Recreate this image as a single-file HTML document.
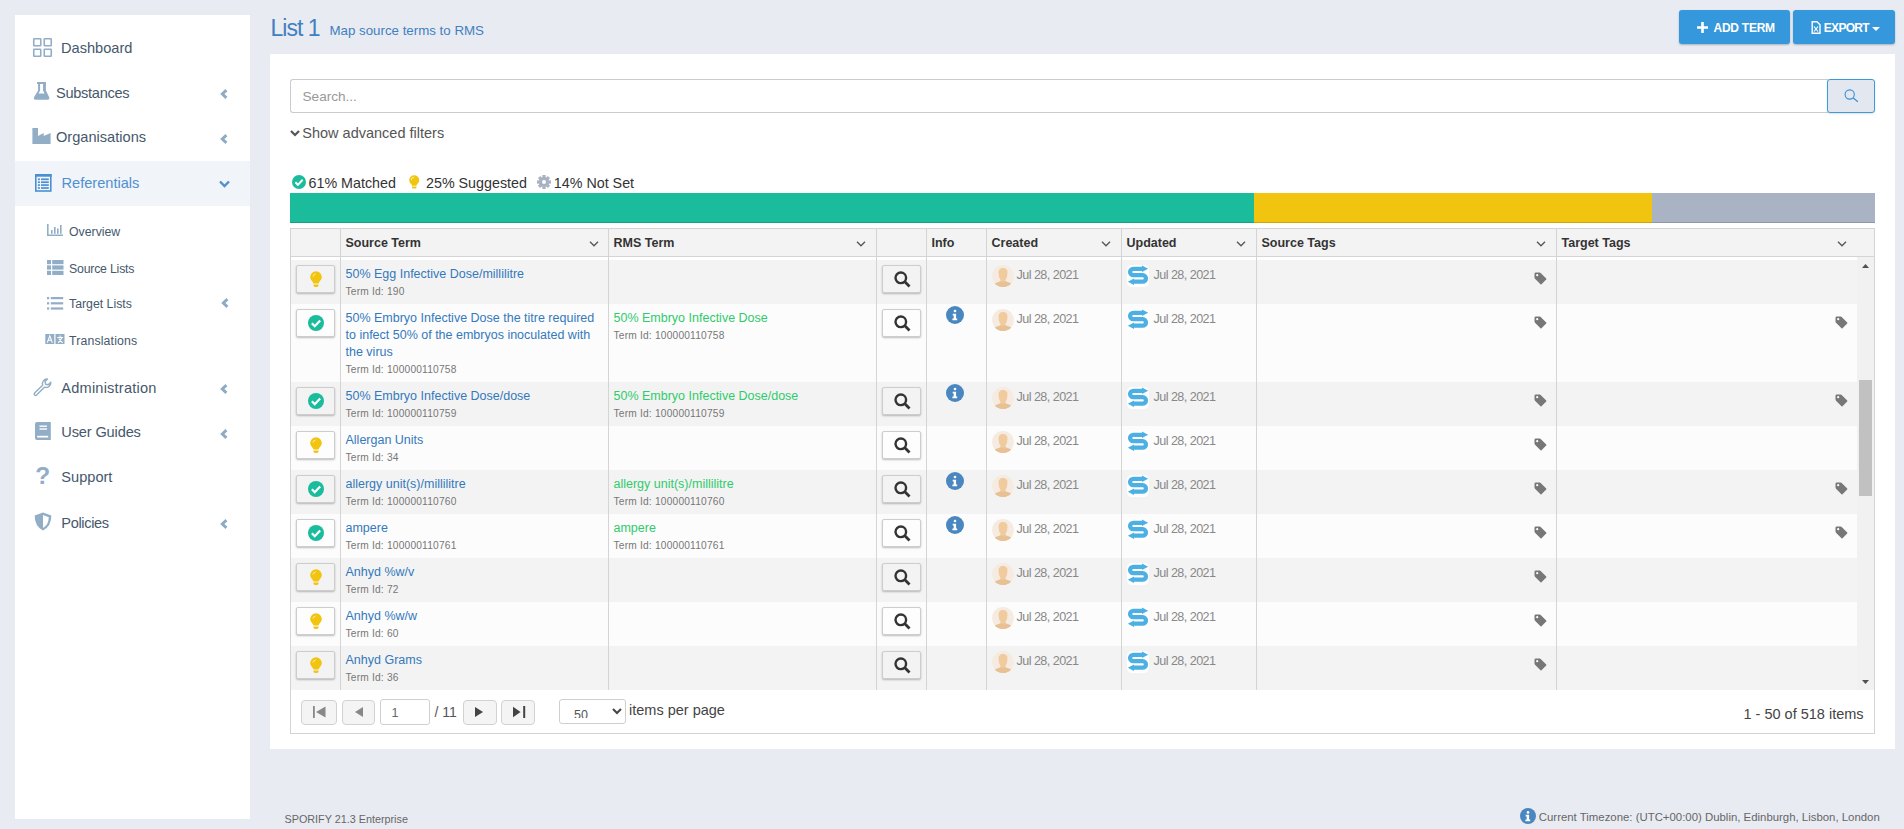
<!DOCTYPE html><html><head><meta charset="utf-8"><style>
*{box-sizing:border-box;margin:0;padding:0}
html,body{width:1904px;height:829px;overflow:hidden;background:#e9ebf3;font-family:"Liberation Sans", sans-serif;color:#333}
.abs{position:absolute}
svg.abs{overflow:visible}
.t{position:absolute;white-space:nowrap;line-height:1}
</style></head><body>
<div class="abs" style="left:15px;top:15px;width:235px;height:804px;background:#fff"></div>
<div class="abs" style="left:15px;top:161px;width:235px;height:45px;background:#f1f4f8"></div>
<svg class="abs" style="left:33px;top:38px" width="19" height="19" viewBox="0 0 19 19" ><rect x="0.75" y="0.75" width="7" height="7" rx="0.6" fill="none" stroke="#92adc6" stroke-width="1.6"/><rect x="0.75" y="11.25" width="7" height="7" rx="0.6" fill="none" stroke="#92adc6" stroke-width="1.6"/><rect x="11.25" y="0.75" width="7" height="7" rx="0.6" fill="none" stroke="#92adc6" stroke-width="1.6"/><rect x="11.25" y="11.25" width="7" height="7" rx="0.6" fill="none" stroke="#92adc6" stroke-width="1.6"/></svg>
<div class="t" style="left:61.00px;top:40.64px;font-size:14.6px;color:#46586c;font-weight:400;">Dashboard</div>
<svg class="abs" style="left:33px;top:81px" width="17" height="19" viewBox="0 0 17 19" ><path d="M4.1 1.1 H13 V3 H12.9 V9.6 L16.2 16.3 Q16.9 18.8 14.5 18.8 H2.8 Q0.3 18.8 1 16.3 L5.1 9.6 V3 H4.1 Z" fill="#92adc6"/><path d="M7.1 3 H10 V9.5 L11.6 12.4 H5.6 L7.1 9.5 Z" fill="#fff"/></svg>
<div class="t" style="left:56.00px;top:85.64px;font-size:14.6px;color:#46586c;font-weight:400;letter-spacing:-0.3px">Substances</div>
<svg class="abs" style="left:32px;top:128px" width="19" height="16" viewBox="0 0 19 16" ><path d="M0.4 0 H6 V8 L11.7 5 V8 L18.6 5 V16 H0.4 Z" fill="#92adc6"/></svg>
<div class="t" style="left:56.00px;top:130.34px;font-size:14.6px;color:#46586c;font-weight:400;">Organisations</div>
<svg class="abs" style="left:35px;top:174px" width="17" height="18" viewBox="0 0 17 18" ><rect x="0.8" y="0.8" width="15" height="16.2" fill="none" stroke="#4a8fd4" stroke-width="1.6"/><rect x="0" y="0" width="16.6" height="2.7" fill="#4a8fd4"/><rect x="2.9" y="4.45" width="2" height="1.7" fill="#4a8fd4"/><rect x="6" y="4.45" width="7.8" height="1.7" fill="#4a8fd4"/><rect x="2.9" y="7.35" width="2" height="1.7" fill="#4a8fd4"/><rect x="6" y="7.35" width="7.8" height="1.7" fill="#4a8fd4"/><rect x="2.9" y="10.25" width="2" height="1.7" fill="#4a8fd4"/><rect x="6" y="10.25" width="7.8" height="1.7" fill="#4a8fd4"/><rect x="2.9" y="13.15" width="2" height="1.7" fill="#4a8fd4"/><rect x="6" y="13.15" width="7.8" height="1.7" fill="#4a8fd4"/></svg>
<div class="t" style="left:61.50px;top:176.34px;font-size:14.6px;color:#4f90d0;font-weight:400;">Referentials</div>
<svg class="abs" style="left:219.7px;top:89px" width="8" height="10" viewBox="0 0 8 10" ><path d="M6.4 1.1 L2.3 5 L6.4 8.9" fill="none" stroke="#8eabc4" stroke-width="2.9" stroke-linecap="butt"/></svg>
<svg class="abs" style="left:219.7px;top:134px" width="8" height="10" viewBox="0 0 8 10" ><path d="M6.4 1.1 L2.3 5 L6.4 8.9" fill="none" stroke="#8eabc4" stroke-width="2.9" stroke-linecap="butt"/></svg>
<svg class="abs" style="left:218.5px;top:180px" width="11" height="8" viewBox="0 0 11 8" ><path d="M1 1.5 L5.5 6 L10 1.5" fill="none" stroke="#4f90d0" stroke-width="2.4"/></svg>
<svg class="abs" style="left:47px;top:224px" width="16" height="12" viewBox="0 0 16 12" ><path d="M0.8 0 V11.2 H16" fill="none" stroke="#92adc6" stroke-width="1.6"/><rect x="4" y="6" width="1.6" height="3.8" fill="#92adc6"/><rect x="7" y="3" width="1.6" height="6.8" fill="#92adc6"/><rect x="10" y="4.5" width="1.6" height="5.3" fill="#92adc6"/><rect x="13" y="1" width="1.6" height="8.8" fill="#92adc6"/></svg>
<div class="t" style="left:69.00px;top:225.69px;font-size:12.3px;color:#46586c;font-weight:400;">Overview</div>
<svg class="abs" style="left:47px;top:260px" width="17" height="15" viewBox="0 0 17 15" ><rect x="0" y="0" width="4" height="4.2" fill="#92adc6"/><rect x="5.2" y="0" width="11.3" height="4.2" fill="#92adc6"/><rect x="0" y="5.4" width="4" height="4.2" fill="#92adc6"/><rect x="5.2" y="5.4" width="11.3" height="4.2" fill="#92adc6"/><rect x="0" y="10.8" width="4" height="4.2" fill="#92adc6"/><rect x="5.2" y="10.8" width="11.3" height="4.2" fill="#92adc6"/></svg>
<div class="t" style="left:69.00px;top:262.79px;font-size:12.3px;color:#46586c;font-weight:400;letter-spacing:-0.2px">Source Lists</div>
<svg class="abs" style="left:47px;top:297px" width="17" height="13" viewBox="0 0 17 13" ><rect x="0" y="0" width="2.2" height="2.2" fill="#92adc6"/><rect x="3.8" y="0" width="12.4" height="2.2" fill="#92adc6"/><rect x="0" y="5.2" width="2.2" height="2.2" fill="#92adc6"/><rect x="3.8" y="5.2" width="12.4" height="2.2" fill="#92adc6"/><rect x="0" y="10.4" width="2.2" height="2.2" fill="#92adc6"/><rect x="3.8" y="10.4" width="12.4" height="2.2" fill="#92adc6"/></svg>
<div class="t" style="left:69.00px;top:298.29px;font-size:12.3px;color:#46586c;font-weight:400;">Target Lists</div>
<svg class="abs" style="left:220.7px;top:298px" width="8" height="10" viewBox="0 0 8 10" ><path d="M6.4 1.1 L2.3 5 L6.4 8.9" fill="none" stroke="#8eabc4" stroke-width="2.9" stroke-linecap="butt"/></svg>
<svg class="abs" style="left:45px;top:334px" width="20" height="10" viewBox="0 0 20 10" ><rect x="0.3" y="0" width="9" height="10" fill="#92adc6"/><rect x="10.5" y="0" width="9" height="10" fill="#92adc6"/><path d="M2.3 8.6 L4.8 1.8 L7.3 8.6 M3.3 6.3 H6.3" fill="none" stroke="#fff" stroke-width="1.1"/><path d="M12.3 3.5 H18 M15.1 1.6 V3.5 M17.2 3.5 L13.2 8.8 M13.8 4.6 L17.6 8.8" fill="none" stroke="#fff" stroke-width="1.1"/></svg>
<div class="t" style="left:69.00px;top:334.59px;font-size:12.3px;color:#46586c;font-weight:400;letter-spacing:0.15px">Translations</div>
<svg class="abs" style="left:33px;top:378px" width="19" height="18" viewBox="0 0 19 18" ><path d="M14.5 1 A4.8 4.8 0 0 0 9.6 7.2 L1.6 15 A1.4 1.4 0 0 0 3.6 17 L11.4 9.2 A4.8 4.8 0 0 0 17.8 4.2 L15.2 6.8 L12.6 6.2 L12 3.6 Z" fill="none" stroke="#92adc6" stroke-width="1.4" stroke-linejoin="round"/></svg>
<div class="t" style="left:61.30px;top:380.64px;font-size:14.6px;color:#46586c;font-weight:400;letter-spacing:0.2px">Administration</div>
<svg class="abs" style="left:220.0px;top:384px" width="8" height="10" viewBox="0 0 8 10" ><path d="M6.4 1.1 L2.3 5 L6.4 8.9" fill="none" stroke="#8eabc4" stroke-width="2.9" stroke-linecap="butt"/></svg>
<svg class="abs" style="left:35px;top:422px" width="16" height="18" viewBox="0 0 16 18" ><path d="M2 0 H15.8 V18 H2 A2 2 0 0 1 0 16 V2 A2 2 0 0 1 2 0 Z" fill="#92adc6"/><rect x="2.2" y="13.8" width="11" height="1.7" fill="#fff"/><rect x="4.5" y="3.5" width="7.5" height="1.4" fill="#fff"/><rect x="4.5" y="6.3" width="7.5" height="1.4" fill="#fff"/></svg>
<div class="t" style="left:61.30px;top:425.34px;font-size:14.6px;color:#46586c;font-weight:400;letter-spacing:-0.15px">User Guides</div>
<svg class="abs" style="left:220.0px;top:429px" width="8" height="10" viewBox="0 0 8 10" ><path d="M6.4 1.1 L2.3 5 L6.4 8.9" fill="none" stroke="#8eabc4" stroke-width="2.9" stroke-linecap="butt"/></svg>
<div class="t" style="left:35.20px;top:464.26px;font-size:24.5px;color:#92adc6;font-weight:700;">?</div>
<div class="t" style="left:61.30px;top:470.24px;font-size:14.6px;color:#46586c;font-weight:400;">Support</div>
<svg class="abs" style="left:33.5px;top:511.5px" width="18" height="19" viewBox="0 0 18 19" ><path d="M9 0.5 L17.3 3.5 Q17.5 14 9 18.5 Q0.5 14 0.7 3.5 Z" fill="#92adc6"/><path d="M9 3 L14.8 5.2 Q14.6 12.8 9 16 Z" fill="#fff"/></svg>
<div class="t" style="left:61.30px;top:515.54px;font-size:14.6px;color:#46586c;font-weight:400;letter-spacing:-0.35px">Policies</div>
<svg class="abs" style="left:220.0px;top:519px" width="8" height="10" viewBox="0 0 8 10" ><path d="M6.4 1.1 L2.3 5 L6.4 8.9" fill="none" stroke="#8eabc4" stroke-width="2.9" stroke-linecap="butt"/></svg>
<div class="t" style="left:270.50px;top:16.83px;font-size:23px;color:#3f80c0;font-weight:400;letter-spacing:-1px">List 1</div>
<div class="t" style="left:329.50px;top:24.44px;font-size:13.3px;color:#3f80c0;font-weight:400;">Map source terms to RMS</div>
<div class="abs" style="left:1679px;top:10px;width:111px;height:34px;background:#3597dc;border-radius:3px;box-shadow:0 1px 2px rgba(0,0,0,.25)"></div>
<div class="abs" style="left:1793px;top:10px;width:102px;height:34px;background:#3597dc;border-radius:3px;box-shadow:0 1px 2px rgba(0,0,0,.25)"></div>
<svg class="abs" style="left:1697px;top:22px" width="11" height="11" viewBox="0 0 11 11" ><path d="M5.5 0 V11 M0 5.5 H11" stroke="#fff" stroke-width="2.6"/></svg>
<div class="t" style="left:1713.50px;top:21.84px;font-size:12px;color:#fff;font-weight:700;letter-spacing:-0.25px">ADD TERM</div>
<svg class="abs" style="left:1811px;top:21px" width="10" height="13" viewBox="0 0 10 13" ><path d="M1.2 0.8 H6 L9 3.8 V12.2 H1.2 Z" fill="none" stroke="#fff" stroke-width="1.4"/><path d="M3 5.5 L7 10.5 M7 5.5 L3 10.5" stroke="#fff" stroke-width="1.2"/></svg>
<div class="t" style="left:1823.80px;top:21.84px;font-size:12px;color:#fff;font-weight:700;letter-spacing:-0.7px">EXPORT</div>
<svg class="abs" style="left:1872px;top:27px" width="8" height="4" viewBox="0 0 8 4" ><path d="M0 0 H8 L4 4 Z" fill="#fff"/></svg>
<div class="abs" style="left:270px;top:54px;width:1625px;height:695px;background:#fff"></div>
<div class="abs" style="left:290px;top:79px;width:1538px;height:34px;border:1px solid #cbcbcb;border-right:none;border-radius:3px 0 0 3px;background:#fff"></div>
<div class="t" style="left:302.50px;top:90.19px;font-size:13.6px;color:#999;font-weight:400;">Search...</div>
<div class="abs" style="left:1827px;top:79px;width:48px;height:34px;border:1px solid #3b9ad9;border-radius:3px;background:#e3e7ef;box-shadow:0 1px 2px rgba(0,0,0,.12)"></div>
<svg class="abs" style="left:1844px;top:89px" width="15" height="14" viewBox="0 0 15 14" ><circle cx="5.7" cy="5.5" r="4.6" fill="none" stroke="#3a8fd6" stroke-width="1.1"/><path d="M9 8.8 L13.8 12.8" stroke="#3a8fd6" stroke-width="1.2"/></svg>
<svg class="abs" style="left:290px;top:130px" width="10" height="7" viewBox="0 0 10 7" ><path d="M1 1 L5 5 L9 1" fill="none" stroke="#555" stroke-width="2.2"/></svg>
<div class="t" style="left:302.30px;top:125.53px;font-size:14.5px;color:#555;font-weight:400;">Show advanced filters</div>
<svg class="abs" style="left:292px;top:175px" width="14" height="14" viewBox="0 0 14 14" ><circle cx="7.0" cy="7.0" r="7.0" fill="#1abc9c"/><path d="M3.36 7.28 L5.88 9.799999999999999 L10.64 4.760000000000001" fill="none" stroke="#fff" stroke-width="1.9600000000000002"/></svg>
<div class="t" style="left:308.50px;top:175.80px;font-size:14.3px;color:#333;font-weight:400;">61% Matched</div>
<svg class="abs" style="left:408.5px;top:175px" width="11" height="14" viewBox="0 0 11 14" ><g transform="scale(0.87,0.85)"><path d="M6 0.3 A5.8 5.8 0 0 1 11.8 6.1 C11.8 8.4 10.4 9.6 9.3 10.9 C8.8 11.5 8.6 12 8.6 12.6 H3.4 C3.4 12 3.2 11.5 2.7 10.9 C1.6 9.6 0.2 8.4 0.2 6.1 A5.8 5.8 0 0 1 6 0.3 Z" fill="#f1c40f"/><path d="M3.5 13.6 H8.5 V14.6 Q8.5 16 7 16 H5 Q3.5 16 3.5 14.6 Z" fill="#f1c40f"/><path d="M2.6 6 A3.4 3.4 0 0 1 6 2.6" fill="none" stroke="#fff" stroke-width="0.9" opacity="0.85"/></g></svg>
<div class="t" style="left:426.00px;top:175.80px;font-size:14.3px;color:#333;font-weight:400;">25% Suggested</div>
<svg class="abs" style="left:537px;top:175px" width="14" height="14" viewBox="0 0 14 14" ><g transform="translate(7,7)" fill="#a9b2c0"><rect x="-1.6" y="-7" width="3.2" height="3.5" transform="rotate(0)"/><rect x="-1.6" y="-7" width="3.2" height="3.5" transform="rotate(45)"/><rect x="-1.6" y="-7" width="3.2" height="3.5" transform="rotate(90)"/><rect x="-1.6" y="-7" width="3.2" height="3.5" transform="rotate(135)"/><rect x="-1.6" y="-7" width="3.2" height="3.5" transform="rotate(180)"/><rect x="-1.6" y="-7" width="3.2" height="3.5" transform="rotate(225)"/><rect x="-1.6" y="-7" width="3.2" height="3.5" transform="rotate(270)"/><rect x="-1.6" y="-7" width="3.2" height="3.5" transform="rotate(315)"/><circle r="5" /></g><circle cx="7" cy="7" r="2" fill="#fff"/></svg>
<div class="t" style="left:553.80px;top:175.80px;font-size:14.3px;color:#333;font-weight:400;">14% Not Set</div>
<div class="abs" style="left:290px;top:193px;width:964px;height:30px;background:#1abc9c;box-shadow:inset 0 -1px 0 rgba(0,0,0,.15)"></div>
<div class="abs" style="left:1254px;top:193px;width:398px;height:30px;background:#f1c40f;box-shadow:inset 0 -1px 0 rgba(0,0,0,.15)"></div>
<div class="abs" style="left:1652px;top:193px;width:223px;height:30px;background:#aab3c3;box-shadow:inset 0 -1px 0 rgba(0,0,0,.15)"></div>
<div class="abs" style="left:290px;top:228px;width:1585px;height:506px;border:1px solid #d4d4d4;background:#fff"></div>
<div class="abs" style="left:291px;top:229px;width:1583px;height:27px;background:#f3f3f3"></div>
<div class="abs" style="left:291px;top:256px;width:1583px;height:1px;background:#d4d4d4"></div>
<div class="abs" style="left:1857px;top:257px;width:17px;height:433px;background:#f1f1f1"></div>
<div class="abs" style="left:1859px;top:380px;width:13px;height:116px;background:#c1c1c1"></div>
<svg class="abs" style="left:1862px;top:264px" width="7" height="4" viewBox="0 0 7 4" ><path d="M0 4 L3.5 0 L7 4 Z" fill="#505050"/></svg>
<svg class="abs" style="left:1862px;top:680px" width="7" height="4" viewBox="0 0 7 4" ><path d="M0 0 L3.5 4 L7 0 Z" fill="#505050"/></svg>
<div class="abs" style="left:291px;top:260px;width:1566px;height:44px;background:#f3f3f3"></div>
<div class="abs" style="left:291px;top:304px;width:1566px;height:78px;background:#fcfcfc"></div>
<div class="abs" style="left:291px;top:382px;width:1566px;height:44px;background:#f3f3f3"></div>
<div class="abs" style="left:291px;top:426px;width:1566px;height:44px;background:#fcfcfc"></div>
<div class="abs" style="left:291px;top:470px;width:1566px;height:44px;background:#f3f3f3"></div>
<div class="abs" style="left:291px;top:514px;width:1566px;height:44px;background:#fcfcfc"></div>
<div class="abs" style="left:291px;top:558px;width:1566px;height:44px;background:#f3f3f3"></div>
<div class="abs" style="left:291px;top:602px;width:1566px;height:44px;background:#fcfcfc"></div>
<div class="abs" style="left:291px;top:646px;width:1566px;height:44px;background:#f3f3f3"></div>
<div class="abs" style="left:340px;top:229px;width:1px;height:461px;background:#d4d4d4"></div>
<div class="abs" style="left:608px;top:229px;width:1px;height:461px;background:#d4d4d4"></div>
<div class="abs" style="left:876px;top:229px;width:1px;height:461px;background:#d4d4d4"></div>
<div class="abs" style="left:926px;top:229px;width:1px;height:461px;background:#d4d4d4"></div>
<div class="abs" style="left:986px;top:229px;width:1px;height:461px;background:#d4d4d4"></div>
<div class="abs" style="left:1121px;top:229px;width:1px;height:461px;background:#d4d4d4"></div>
<div class="abs" style="left:1256px;top:229px;width:1px;height:461px;background:#d4d4d4"></div>
<div class="abs" style="left:1556px;top:229px;width:1px;height:461px;background:#d4d4d4"></div>
<div class="t" style="left:345.50px;top:237.02px;font-size:12.5px;color:#333;font-weight:700;">Source Term</div>
<svg class="abs" style="left:589px;top:241px" width="10" height="6" viewBox="0 0 10 6" ><path d="M1 0.8 L5 4.8 L9 0.8" fill="none" stroke="#555" stroke-width="1.3"/></svg>
<div class="t" style="left:613.50px;top:237.02px;font-size:12.5px;color:#333;font-weight:700;">RMS Term</div>
<svg class="abs" style="left:856px;top:241px" width="10" height="6" viewBox="0 0 10 6" ><path d="M1 0.8 L5 4.8 L9 0.8" fill="none" stroke="#555" stroke-width="1.3"/></svg>
<div class="t" style="left:931.50px;top:237.02px;font-size:12.5px;color:#333;font-weight:700;">Info</div>
<div class="t" style="left:991.50px;top:237.02px;font-size:12.5px;color:#333;font-weight:700;">Created</div>
<svg class="abs" style="left:1101px;top:241px" width="10" height="6" viewBox="0 0 10 6" ><path d="M1 0.8 L5 4.8 L9 0.8" fill="none" stroke="#555" stroke-width="1.3"/></svg>
<div class="t" style="left:1126.50px;top:237.02px;font-size:12.5px;color:#333;font-weight:700;">Updated</div>
<svg class="abs" style="left:1236px;top:241px" width="10" height="6" viewBox="0 0 10 6" ><path d="M1 0.8 L5 4.8 L9 0.8" fill="none" stroke="#555" stroke-width="1.3"/></svg>
<div class="t" style="left:1261.50px;top:237.02px;font-size:12.5px;color:#333;font-weight:700;">Source Tags</div>
<svg class="abs" style="left:1536px;top:241px" width="10" height="6" viewBox="0 0 10 6" ><path d="M1 0.8 L5 4.8 L9 0.8" fill="none" stroke="#555" stroke-width="1.3"/></svg>
<div class="t" style="left:1561.50px;top:237.02px;font-size:12.5px;color:#333;font-weight:700;">Target Tags</div>
<svg class="abs" style="left:1837px;top:241px" width="10" height="6" viewBox="0 0 10 6" ><path d="M1 0.8 L5 4.8 L9 0.8" fill="none" stroke="#555" stroke-width="1.3"/></svg>
<div class="abs" style="left:296px;top:265px;width:39px;height:28px;background:#f3f3f3;border:1px solid #cdcdcd;border-radius:2px;box-shadow:0 1px 2px rgba(0,0,0,.25)"></div>
<svg class="abs" style="left:309.5px;top:270.6px" width="12" height="16" viewBox="0 0 12 16" ><path d="M6 0.3 A5.8 5.8 0 0 1 11.8 6.1 C11.8 8.4 10.4 9.6 9.3 10.9 C8.8 11.5 8.6 12 8.6 12.6 H3.4 C3.4 12 3.2 11.5 2.7 10.9 C1.6 9.6 0.2 8.4 0.2 6.1 A5.8 5.8 0 0 1 6 0.3 Z" fill="#f1c40f"/><path d="M3.5 13.6 H8.5 V14.6 Q8.5 16 7 16 H5 Q3.5 16 3.5 14.6 Z" fill="#f1c40f"/><path d="M3 5.6 A3 3 0 0 1 5.6 3" fill="none" stroke="#fff" stroke-width="0.8" opacity="0.8"/></svg>
<div class="t" style="left:345.50px;top:267.82px;font-size:12.5px;color:#3479bc;font-weight:400;">50% Egg Infective Dose/millilitre</div>
<div class="t" style="left:345.50px;top:286.57px;font-size:10.2px;color:#777;font-weight:400;letter-spacing:0.2px">Term Id: 190</div>
<div class="abs" style="left:882px;top:265px;width:39px;height:28px;background:#f3f3f3;border:1px solid #cdcdcd;border-radius:2px;box-shadow:0 1px 2px rgba(0,0,0,.25)"></div>
<svg class="abs" style="left:893.5px;top:270.5px" width="17" height="17" viewBox="0 0 17 17" ><circle cx="6.8" cy="6.8" r="5.3" fill="none" stroke="#333" stroke-width="2.4"/><path d="M10.6 10.6 L15.5 15.5" stroke="#333" stroke-width="2.8" stroke-linecap="butt"/></svg>
<svg class="abs" style="left:992px;top:265.3px" width="22" height="22" viewBox="0 0 22 22" ><circle cx="11" cy="11" r="10.9" fill="#f5ebe1"/><path d="M6.5 7.5 Q6.5 3 11 3 Q15.5 3 15.5 7.5 Q15.5 12 13.5 15 V16.4 L19.2 18.5 Q16 21.9 11 21.9 Q6 21.9 2.8 18.5 L8.5 16.4 V15 Q6.5 12 6.5 7.5 Z" fill="#efcb9d"/><path d="M2.8 18.5 L8.5 16.2 Q11 17.8 13.5 16.2 L19.2 18.5 Q16 21.9 11 21.9 Q6 21.9 2.8 18.5 Z" fill="#e7c195"/></svg>
<div class="t" style="left:1016.50px;top:268.63px;font-size:12.6px;color:#888;font-weight:400;letter-spacing:-0.55px">Jul 28, 2021</div>
<svg class="abs" style="left:1127px;top:265.3px" width="22" height="22" viewBox="0 0 22 22" ><rect x="0" y="0" width="22" height="22" rx="5" fill="#fff"/><path d="M16 3.8 H6.3 A3.2 3.2 0 0 0 6.3 10.2 H15.7 A3.25 3.25 0 0 1 15.7 16.7 H6" fill="none" stroke="#4cb0e4" stroke-width="4.3"/><path d="M15 0.6 L21.2 3.8 L15 7 Z" fill="#4cb0e4"/><path d="M7 13.5 L0.8 16.7 L7 19.9 Z" fill="#4cb0e4"/></svg>
<div class="t" style="left:1153.50px;top:268.63px;font-size:12.6px;color:#888;font-weight:400;letter-spacing:-0.55px">Jul 28, 2021</div>
<svg class="abs" style="left:1533.5px;top:271.5px" width="13" height="13" viewBox="0 0 13 13" ><path d="M0.5 1.8 Q0.5 0.5 1.8 0.5 H5.6 Q6.2 0.5 6.7 1 L12.2 6.5 Q12.7 7 12.2 7.5 L7.5 12.2 Q7 12.7 6.5 12.2 L1 6.7 Q0.5 6.2 0.5 5.6 Z" fill="#777"/><circle cx="3.2" cy="3.2" r="1.1" fill="#fff"/></svg>
<div class="abs" style="left:296px;top:309px;width:39px;height:28px;background:#fdfdfd;border:1px solid #cdcdcd;border-radius:2px;box-shadow:0 1px 2px rgba(0,0,0,.25)"></div>
<svg class="abs" style="left:308px;top:315px" width="16" height="16" viewBox="0 0 16 16" ><circle cx="8.0" cy="8.0" r="8.0" fill="#1abc9c"/><path d="M3.84 8.32 L6.72 11.2 L12.16 5.44" fill="none" stroke="#fff" stroke-width="2.24"/></svg>
<div class="t" style="left:345.50px;top:311.82px;font-size:12.5px;color:#3479bc;font-weight:400;">50% Embryo Infective Dose the titre required</div>
<div class="t" style="left:345.50px;top:328.82px;font-size:12.5px;color:#3479bc;font-weight:400;">to infect 50% of the embryos inoculated with</div>
<div class="t" style="left:345.50px;top:345.82px;font-size:12.5px;color:#3479bc;font-weight:400;">the virus</div>
<div class="t" style="left:345.50px;top:364.57px;font-size:10.2px;color:#777;font-weight:400;letter-spacing:0.2px">Term Id: 100000110758</div>
<div class="t" style="left:613.50px;top:311.82px;font-size:12.5px;color:#2fcb6c;font-weight:400;">50% Embryo Infective Dose</div>
<div class="t" style="left:613.50px;top:330.57px;font-size:10.2px;color:#777;font-weight:400;letter-spacing:0.2px">Term Id: 100000110758</div>
<div class="abs" style="left:882px;top:309px;width:39px;height:28px;background:#fdfdfd;border:1px solid #cdcdcd;border-radius:2px;box-shadow:0 1px 2px rgba(0,0,0,.25)"></div>
<svg class="abs" style="left:893.5px;top:314.5px" width="17" height="17" viewBox="0 0 17 17" ><circle cx="6.8" cy="6.8" r="5.3" fill="none" stroke="#333" stroke-width="2.4"/><path d="M10.6 10.6 L15.5 15.5" stroke="#333" stroke-width="2.8" stroke-linecap="butt"/></svg>
<svg class="abs" style="left:946px;top:306px" width="18" height="18" viewBox="0 0 18 18" ><circle cx="9.0" cy="9.0" r="9.0" fill="#4a87c0"/><circle cx="9.0" cy="4.95" r="1.3" fill="#fff"/><path d="M6.7 7.8 H10.1 V12.6 H11.2 V14.2 H6.4 V12.6 H7.7 V9.4 H6.7 Z" fill="#fff"/></svg>
<svg class="abs" style="left:992px;top:309.3px" width="22" height="22" viewBox="0 0 22 22" ><circle cx="11" cy="11" r="10.9" fill="#f5ebe1"/><path d="M6.5 7.5 Q6.5 3 11 3 Q15.5 3 15.5 7.5 Q15.5 12 13.5 15 V16.4 L19.2 18.5 Q16 21.9 11 21.9 Q6 21.9 2.8 18.5 L8.5 16.4 V15 Q6.5 12 6.5 7.5 Z" fill="#efcb9d"/><path d="M2.8 18.5 L8.5 16.2 Q11 17.8 13.5 16.2 L19.2 18.5 Q16 21.9 11 21.9 Q6 21.9 2.8 18.5 Z" fill="#e7c195"/></svg>
<div class="t" style="left:1016.50px;top:312.63px;font-size:12.6px;color:#888;font-weight:400;letter-spacing:-0.55px">Jul 28, 2021</div>
<svg class="abs" style="left:1127px;top:309.3px" width="22" height="22" viewBox="0 0 22 22" ><rect x="0" y="0" width="22" height="22" rx="5" fill="#fff"/><path d="M16 3.8 H6.3 A3.2 3.2 0 0 0 6.3 10.2 H15.7 A3.25 3.25 0 0 1 15.7 16.7 H6" fill="none" stroke="#4cb0e4" stroke-width="4.3"/><path d="M15 0.6 L21.2 3.8 L15 7 Z" fill="#4cb0e4"/><path d="M7 13.5 L0.8 16.7 L7 19.9 Z" fill="#4cb0e4"/></svg>
<div class="t" style="left:1153.50px;top:312.63px;font-size:12.6px;color:#888;font-weight:400;letter-spacing:-0.55px">Jul 28, 2021</div>
<svg class="abs" style="left:1533.5px;top:315.5px" width="13" height="13" viewBox="0 0 13 13" ><path d="M0.5 1.8 Q0.5 0.5 1.8 0.5 H5.6 Q6.2 0.5 6.7 1 L12.2 6.5 Q12.7 7 12.2 7.5 L7.5 12.2 Q7 12.7 6.5 12.2 L1 6.7 Q0.5 6.2 0.5 5.6 Z" fill="#777"/><circle cx="3.2" cy="3.2" r="1.1" fill="#fff"/></svg>
<svg class="abs" style="left:1834.5px;top:315.5px" width="13" height="13" viewBox="0 0 13 13" ><path d="M0.5 1.8 Q0.5 0.5 1.8 0.5 H5.6 Q6.2 0.5 6.7 1 L12.2 6.5 Q12.7 7 12.2 7.5 L7.5 12.2 Q7 12.7 6.5 12.2 L1 6.7 Q0.5 6.2 0.5 5.6 Z" fill="#777"/><circle cx="3.2" cy="3.2" r="1.1" fill="#fff"/></svg>
<div class="abs" style="left:296px;top:387px;width:39px;height:28px;background:#f3f3f3;border:1px solid #cdcdcd;border-radius:2px;box-shadow:0 1px 2px rgba(0,0,0,.25)"></div>
<svg class="abs" style="left:308px;top:393px" width="16" height="16" viewBox="0 0 16 16" ><circle cx="8.0" cy="8.0" r="8.0" fill="#1abc9c"/><path d="M3.84 8.32 L6.72 11.2 L12.16 5.44" fill="none" stroke="#fff" stroke-width="2.24"/></svg>
<div class="t" style="left:345.50px;top:389.82px;font-size:12.5px;color:#3479bc;font-weight:400;">50% Embryo Infective Dose/dose</div>
<div class="t" style="left:345.50px;top:408.57px;font-size:10.2px;color:#777;font-weight:400;letter-spacing:0.2px">Term Id: 100000110759</div>
<div class="t" style="left:613.50px;top:389.82px;font-size:12.5px;color:#2fcb6c;font-weight:400;">50% Embryo Infective Dose/dose</div>
<div class="t" style="left:613.50px;top:408.57px;font-size:10.2px;color:#777;font-weight:400;letter-spacing:0.2px">Term Id: 100000110759</div>
<div class="abs" style="left:882px;top:387px;width:39px;height:28px;background:#f3f3f3;border:1px solid #cdcdcd;border-radius:2px;box-shadow:0 1px 2px rgba(0,0,0,.25)"></div>
<svg class="abs" style="left:893.5px;top:392.5px" width="17" height="17" viewBox="0 0 17 17" ><circle cx="6.8" cy="6.8" r="5.3" fill="none" stroke="#333" stroke-width="2.4"/><path d="M10.6 10.6 L15.5 15.5" stroke="#333" stroke-width="2.8" stroke-linecap="butt"/></svg>
<svg class="abs" style="left:946px;top:384px" width="18" height="18" viewBox="0 0 18 18" ><circle cx="9.0" cy="9.0" r="9.0" fill="#4a87c0"/><circle cx="9.0" cy="4.95" r="1.3" fill="#fff"/><path d="M6.7 7.8 H10.1 V12.6 H11.2 V14.2 H6.4 V12.6 H7.7 V9.4 H6.7 Z" fill="#fff"/></svg>
<svg class="abs" style="left:992px;top:387.3px" width="22" height="22" viewBox="0 0 22 22" ><circle cx="11" cy="11" r="10.9" fill="#f5ebe1"/><path d="M6.5 7.5 Q6.5 3 11 3 Q15.5 3 15.5 7.5 Q15.5 12 13.5 15 V16.4 L19.2 18.5 Q16 21.9 11 21.9 Q6 21.9 2.8 18.5 L8.5 16.4 V15 Q6.5 12 6.5 7.5 Z" fill="#efcb9d"/><path d="M2.8 18.5 L8.5 16.2 Q11 17.8 13.5 16.2 L19.2 18.5 Q16 21.9 11 21.9 Q6 21.9 2.8 18.5 Z" fill="#e7c195"/></svg>
<div class="t" style="left:1016.50px;top:390.63px;font-size:12.6px;color:#888;font-weight:400;letter-spacing:-0.55px">Jul 28, 2021</div>
<svg class="abs" style="left:1127px;top:387.3px" width="22" height="22" viewBox="0 0 22 22" ><rect x="0" y="0" width="22" height="22" rx="5" fill="#fff"/><path d="M16 3.8 H6.3 A3.2 3.2 0 0 0 6.3 10.2 H15.7 A3.25 3.25 0 0 1 15.7 16.7 H6" fill="none" stroke="#4cb0e4" stroke-width="4.3"/><path d="M15 0.6 L21.2 3.8 L15 7 Z" fill="#4cb0e4"/><path d="M7 13.5 L0.8 16.7 L7 19.9 Z" fill="#4cb0e4"/></svg>
<div class="t" style="left:1153.50px;top:390.63px;font-size:12.6px;color:#888;font-weight:400;letter-spacing:-0.55px">Jul 28, 2021</div>
<svg class="abs" style="left:1533.5px;top:393.5px" width="13" height="13" viewBox="0 0 13 13" ><path d="M0.5 1.8 Q0.5 0.5 1.8 0.5 H5.6 Q6.2 0.5 6.7 1 L12.2 6.5 Q12.7 7 12.2 7.5 L7.5 12.2 Q7 12.7 6.5 12.2 L1 6.7 Q0.5 6.2 0.5 5.6 Z" fill="#777"/><circle cx="3.2" cy="3.2" r="1.1" fill="#fff"/></svg>
<svg class="abs" style="left:1834.5px;top:393.5px" width="13" height="13" viewBox="0 0 13 13" ><path d="M0.5 1.8 Q0.5 0.5 1.8 0.5 H5.6 Q6.2 0.5 6.7 1 L12.2 6.5 Q12.7 7 12.2 7.5 L7.5 12.2 Q7 12.7 6.5 12.2 L1 6.7 Q0.5 6.2 0.5 5.6 Z" fill="#777"/><circle cx="3.2" cy="3.2" r="1.1" fill="#fff"/></svg>
<div class="abs" style="left:296px;top:431px;width:39px;height:28px;background:#fdfdfd;border:1px solid #cdcdcd;border-radius:2px;box-shadow:0 1px 2px rgba(0,0,0,.25)"></div>
<svg class="abs" style="left:309.5px;top:436.6px" width="12" height="16" viewBox="0 0 12 16" ><path d="M6 0.3 A5.8 5.8 0 0 1 11.8 6.1 C11.8 8.4 10.4 9.6 9.3 10.9 C8.8 11.5 8.6 12 8.6 12.6 H3.4 C3.4 12 3.2 11.5 2.7 10.9 C1.6 9.6 0.2 8.4 0.2 6.1 A5.8 5.8 0 0 1 6 0.3 Z" fill="#f1c40f"/><path d="M3.5 13.6 H8.5 V14.6 Q8.5 16 7 16 H5 Q3.5 16 3.5 14.6 Z" fill="#f1c40f"/><path d="M3 5.6 A3 3 0 0 1 5.6 3" fill="none" stroke="#fff" stroke-width="0.8" opacity="0.8"/></svg>
<div class="t" style="left:345.50px;top:433.82px;font-size:12.5px;color:#3479bc;font-weight:400;">Allergan Units</div>
<div class="t" style="left:345.50px;top:452.57px;font-size:10.2px;color:#777;font-weight:400;letter-spacing:0.2px">Term Id: 34</div>
<div class="abs" style="left:882px;top:431px;width:39px;height:28px;background:#fdfdfd;border:1px solid #cdcdcd;border-radius:2px;box-shadow:0 1px 2px rgba(0,0,0,.25)"></div>
<svg class="abs" style="left:893.5px;top:436.5px" width="17" height="17" viewBox="0 0 17 17" ><circle cx="6.8" cy="6.8" r="5.3" fill="none" stroke="#333" stroke-width="2.4"/><path d="M10.6 10.6 L15.5 15.5" stroke="#333" stroke-width="2.8" stroke-linecap="butt"/></svg>
<svg class="abs" style="left:992px;top:431.3px" width="22" height="22" viewBox="0 0 22 22" ><circle cx="11" cy="11" r="10.9" fill="#f5ebe1"/><path d="M6.5 7.5 Q6.5 3 11 3 Q15.5 3 15.5 7.5 Q15.5 12 13.5 15 V16.4 L19.2 18.5 Q16 21.9 11 21.9 Q6 21.9 2.8 18.5 L8.5 16.4 V15 Q6.5 12 6.5 7.5 Z" fill="#efcb9d"/><path d="M2.8 18.5 L8.5 16.2 Q11 17.8 13.5 16.2 L19.2 18.5 Q16 21.9 11 21.9 Q6 21.9 2.8 18.5 Z" fill="#e7c195"/></svg>
<div class="t" style="left:1016.50px;top:434.63px;font-size:12.6px;color:#888;font-weight:400;letter-spacing:-0.55px">Jul 28, 2021</div>
<svg class="abs" style="left:1127px;top:431.3px" width="22" height="22" viewBox="0 0 22 22" ><rect x="0" y="0" width="22" height="22" rx="5" fill="#fff"/><path d="M16 3.8 H6.3 A3.2 3.2 0 0 0 6.3 10.2 H15.7 A3.25 3.25 0 0 1 15.7 16.7 H6" fill="none" stroke="#4cb0e4" stroke-width="4.3"/><path d="M15 0.6 L21.2 3.8 L15 7 Z" fill="#4cb0e4"/><path d="M7 13.5 L0.8 16.7 L7 19.9 Z" fill="#4cb0e4"/></svg>
<div class="t" style="left:1153.50px;top:434.63px;font-size:12.6px;color:#888;font-weight:400;letter-spacing:-0.55px">Jul 28, 2021</div>
<svg class="abs" style="left:1533.5px;top:437.5px" width="13" height="13" viewBox="0 0 13 13" ><path d="M0.5 1.8 Q0.5 0.5 1.8 0.5 H5.6 Q6.2 0.5 6.7 1 L12.2 6.5 Q12.7 7 12.2 7.5 L7.5 12.2 Q7 12.7 6.5 12.2 L1 6.7 Q0.5 6.2 0.5 5.6 Z" fill="#777"/><circle cx="3.2" cy="3.2" r="1.1" fill="#fff"/></svg>
<div class="abs" style="left:296px;top:475px;width:39px;height:28px;background:#f3f3f3;border:1px solid #cdcdcd;border-radius:2px;box-shadow:0 1px 2px rgba(0,0,0,.25)"></div>
<svg class="abs" style="left:308px;top:481px" width="16" height="16" viewBox="0 0 16 16" ><circle cx="8.0" cy="8.0" r="8.0" fill="#1abc9c"/><path d="M3.84 8.32 L6.72 11.2 L12.16 5.44" fill="none" stroke="#fff" stroke-width="2.24"/></svg>
<div class="t" style="left:345.50px;top:477.82px;font-size:12.5px;color:#3479bc;font-weight:400;">allergy unit(s)/millilitre</div>
<div class="t" style="left:345.50px;top:496.57px;font-size:10.2px;color:#777;font-weight:400;letter-spacing:0.2px">Term Id: 100000110760</div>
<div class="t" style="left:613.50px;top:477.82px;font-size:12.5px;color:#2fcb6c;font-weight:400;">allergy unit(s)/millilitre</div>
<div class="t" style="left:613.50px;top:496.57px;font-size:10.2px;color:#777;font-weight:400;letter-spacing:0.2px">Term Id: 100000110760</div>
<div class="abs" style="left:882px;top:475px;width:39px;height:28px;background:#f3f3f3;border:1px solid #cdcdcd;border-radius:2px;box-shadow:0 1px 2px rgba(0,0,0,.25)"></div>
<svg class="abs" style="left:893.5px;top:480.5px" width="17" height="17" viewBox="0 0 17 17" ><circle cx="6.8" cy="6.8" r="5.3" fill="none" stroke="#333" stroke-width="2.4"/><path d="M10.6 10.6 L15.5 15.5" stroke="#333" stroke-width="2.8" stroke-linecap="butt"/></svg>
<svg class="abs" style="left:946px;top:472px" width="18" height="18" viewBox="0 0 18 18" ><circle cx="9.0" cy="9.0" r="9.0" fill="#4a87c0"/><circle cx="9.0" cy="4.95" r="1.3" fill="#fff"/><path d="M6.7 7.8 H10.1 V12.6 H11.2 V14.2 H6.4 V12.6 H7.7 V9.4 H6.7 Z" fill="#fff"/></svg>
<svg class="abs" style="left:992px;top:475.3px" width="22" height="22" viewBox="0 0 22 22" ><circle cx="11" cy="11" r="10.9" fill="#f5ebe1"/><path d="M6.5 7.5 Q6.5 3 11 3 Q15.5 3 15.5 7.5 Q15.5 12 13.5 15 V16.4 L19.2 18.5 Q16 21.9 11 21.9 Q6 21.9 2.8 18.5 L8.5 16.4 V15 Q6.5 12 6.5 7.5 Z" fill="#efcb9d"/><path d="M2.8 18.5 L8.5 16.2 Q11 17.8 13.5 16.2 L19.2 18.5 Q16 21.9 11 21.9 Q6 21.9 2.8 18.5 Z" fill="#e7c195"/></svg>
<div class="t" style="left:1016.50px;top:478.63px;font-size:12.6px;color:#888;font-weight:400;letter-spacing:-0.55px">Jul 28, 2021</div>
<svg class="abs" style="left:1127px;top:475.3px" width="22" height="22" viewBox="0 0 22 22" ><rect x="0" y="0" width="22" height="22" rx="5" fill="#fff"/><path d="M16 3.8 H6.3 A3.2 3.2 0 0 0 6.3 10.2 H15.7 A3.25 3.25 0 0 1 15.7 16.7 H6" fill="none" stroke="#4cb0e4" stroke-width="4.3"/><path d="M15 0.6 L21.2 3.8 L15 7 Z" fill="#4cb0e4"/><path d="M7 13.5 L0.8 16.7 L7 19.9 Z" fill="#4cb0e4"/></svg>
<div class="t" style="left:1153.50px;top:478.63px;font-size:12.6px;color:#888;font-weight:400;letter-spacing:-0.55px">Jul 28, 2021</div>
<svg class="abs" style="left:1533.5px;top:481.5px" width="13" height="13" viewBox="0 0 13 13" ><path d="M0.5 1.8 Q0.5 0.5 1.8 0.5 H5.6 Q6.2 0.5 6.7 1 L12.2 6.5 Q12.7 7 12.2 7.5 L7.5 12.2 Q7 12.7 6.5 12.2 L1 6.7 Q0.5 6.2 0.5 5.6 Z" fill="#777"/><circle cx="3.2" cy="3.2" r="1.1" fill="#fff"/></svg>
<svg class="abs" style="left:1834.5px;top:481.5px" width="13" height="13" viewBox="0 0 13 13" ><path d="M0.5 1.8 Q0.5 0.5 1.8 0.5 H5.6 Q6.2 0.5 6.7 1 L12.2 6.5 Q12.7 7 12.2 7.5 L7.5 12.2 Q7 12.7 6.5 12.2 L1 6.7 Q0.5 6.2 0.5 5.6 Z" fill="#777"/><circle cx="3.2" cy="3.2" r="1.1" fill="#fff"/></svg>
<div class="abs" style="left:296px;top:519px;width:39px;height:28px;background:#fdfdfd;border:1px solid #cdcdcd;border-radius:2px;box-shadow:0 1px 2px rgba(0,0,0,.25)"></div>
<svg class="abs" style="left:308px;top:525px" width="16" height="16" viewBox="0 0 16 16" ><circle cx="8.0" cy="8.0" r="8.0" fill="#1abc9c"/><path d="M3.84 8.32 L6.72 11.2 L12.16 5.44" fill="none" stroke="#fff" stroke-width="2.24"/></svg>
<div class="t" style="left:345.50px;top:521.82px;font-size:12.5px;color:#3479bc;font-weight:400;">ampere</div>
<div class="t" style="left:345.50px;top:540.57px;font-size:10.2px;color:#777;font-weight:400;letter-spacing:0.2px">Term Id: 100000110761</div>
<div class="t" style="left:613.50px;top:521.82px;font-size:12.5px;color:#2fcb6c;font-weight:400;">ampere</div>
<div class="t" style="left:613.50px;top:540.57px;font-size:10.2px;color:#777;font-weight:400;letter-spacing:0.2px">Term Id: 100000110761</div>
<div class="abs" style="left:882px;top:519px;width:39px;height:28px;background:#fdfdfd;border:1px solid #cdcdcd;border-radius:2px;box-shadow:0 1px 2px rgba(0,0,0,.25)"></div>
<svg class="abs" style="left:893.5px;top:524.5px" width="17" height="17" viewBox="0 0 17 17" ><circle cx="6.8" cy="6.8" r="5.3" fill="none" stroke="#333" stroke-width="2.4"/><path d="M10.6 10.6 L15.5 15.5" stroke="#333" stroke-width="2.8" stroke-linecap="butt"/></svg>
<svg class="abs" style="left:946px;top:516px" width="18" height="18" viewBox="0 0 18 18" ><circle cx="9.0" cy="9.0" r="9.0" fill="#4a87c0"/><circle cx="9.0" cy="4.95" r="1.3" fill="#fff"/><path d="M6.7 7.8 H10.1 V12.6 H11.2 V14.2 H6.4 V12.6 H7.7 V9.4 H6.7 Z" fill="#fff"/></svg>
<svg class="abs" style="left:992px;top:519.3px" width="22" height="22" viewBox="0 0 22 22" ><circle cx="11" cy="11" r="10.9" fill="#f5ebe1"/><path d="M6.5 7.5 Q6.5 3 11 3 Q15.5 3 15.5 7.5 Q15.5 12 13.5 15 V16.4 L19.2 18.5 Q16 21.9 11 21.9 Q6 21.9 2.8 18.5 L8.5 16.4 V15 Q6.5 12 6.5 7.5 Z" fill="#efcb9d"/><path d="M2.8 18.5 L8.5 16.2 Q11 17.8 13.5 16.2 L19.2 18.5 Q16 21.9 11 21.9 Q6 21.9 2.8 18.5 Z" fill="#e7c195"/></svg>
<div class="t" style="left:1016.50px;top:522.63px;font-size:12.6px;color:#888;font-weight:400;letter-spacing:-0.55px">Jul 28, 2021</div>
<svg class="abs" style="left:1127px;top:519.3px" width="22" height="22" viewBox="0 0 22 22" ><rect x="0" y="0" width="22" height="22" rx="5" fill="#fff"/><path d="M16 3.8 H6.3 A3.2 3.2 0 0 0 6.3 10.2 H15.7 A3.25 3.25 0 0 1 15.7 16.7 H6" fill="none" stroke="#4cb0e4" stroke-width="4.3"/><path d="M15 0.6 L21.2 3.8 L15 7 Z" fill="#4cb0e4"/><path d="M7 13.5 L0.8 16.7 L7 19.9 Z" fill="#4cb0e4"/></svg>
<div class="t" style="left:1153.50px;top:522.63px;font-size:12.6px;color:#888;font-weight:400;letter-spacing:-0.55px">Jul 28, 2021</div>
<svg class="abs" style="left:1533.5px;top:525.5px" width="13" height="13" viewBox="0 0 13 13" ><path d="M0.5 1.8 Q0.5 0.5 1.8 0.5 H5.6 Q6.2 0.5 6.7 1 L12.2 6.5 Q12.7 7 12.2 7.5 L7.5 12.2 Q7 12.7 6.5 12.2 L1 6.7 Q0.5 6.2 0.5 5.6 Z" fill="#777"/><circle cx="3.2" cy="3.2" r="1.1" fill="#fff"/></svg>
<svg class="abs" style="left:1834.5px;top:525.5px" width="13" height="13" viewBox="0 0 13 13" ><path d="M0.5 1.8 Q0.5 0.5 1.8 0.5 H5.6 Q6.2 0.5 6.7 1 L12.2 6.5 Q12.7 7 12.2 7.5 L7.5 12.2 Q7 12.7 6.5 12.2 L1 6.7 Q0.5 6.2 0.5 5.6 Z" fill="#777"/><circle cx="3.2" cy="3.2" r="1.1" fill="#fff"/></svg>
<div class="abs" style="left:296px;top:563px;width:39px;height:28px;background:#f3f3f3;border:1px solid #cdcdcd;border-radius:2px;box-shadow:0 1px 2px rgba(0,0,0,.25)"></div>
<svg class="abs" style="left:309.5px;top:568.6px" width="12" height="16" viewBox="0 0 12 16" ><path d="M6 0.3 A5.8 5.8 0 0 1 11.8 6.1 C11.8 8.4 10.4 9.6 9.3 10.9 C8.8 11.5 8.6 12 8.6 12.6 H3.4 C3.4 12 3.2 11.5 2.7 10.9 C1.6 9.6 0.2 8.4 0.2 6.1 A5.8 5.8 0 0 1 6 0.3 Z" fill="#f1c40f"/><path d="M3.5 13.6 H8.5 V14.6 Q8.5 16 7 16 H5 Q3.5 16 3.5 14.6 Z" fill="#f1c40f"/><path d="M3 5.6 A3 3 0 0 1 5.6 3" fill="none" stroke="#fff" stroke-width="0.8" opacity="0.8"/></svg>
<div class="t" style="left:345.50px;top:565.82px;font-size:12.5px;color:#3479bc;font-weight:400;">Anhyd %w/v</div>
<div class="t" style="left:345.50px;top:584.57px;font-size:10.2px;color:#777;font-weight:400;letter-spacing:0.2px">Term Id: 72</div>
<div class="abs" style="left:882px;top:563px;width:39px;height:28px;background:#f3f3f3;border:1px solid #cdcdcd;border-radius:2px;box-shadow:0 1px 2px rgba(0,0,0,.25)"></div>
<svg class="abs" style="left:893.5px;top:568.5px" width="17" height="17" viewBox="0 0 17 17" ><circle cx="6.8" cy="6.8" r="5.3" fill="none" stroke="#333" stroke-width="2.4"/><path d="M10.6 10.6 L15.5 15.5" stroke="#333" stroke-width="2.8" stroke-linecap="butt"/></svg>
<svg class="abs" style="left:992px;top:563.3px" width="22" height="22" viewBox="0 0 22 22" ><circle cx="11" cy="11" r="10.9" fill="#f5ebe1"/><path d="M6.5 7.5 Q6.5 3 11 3 Q15.5 3 15.5 7.5 Q15.5 12 13.5 15 V16.4 L19.2 18.5 Q16 21.9 11 21.9 Q6 21.9 2.8 18.5 L8.5 16.4 V15 Q6.5 12 6.5 7.5 Z" fill="#efcb9d"/><path d="M2.8 18.5 L8.5 16.2 Q11 17.8 13.5 16.2 L19.2 18.5 Q16 21.9 11 21.9 Q6 21.9 2.8 18.5 Z" fill="#e7c195"/></svg>
<div class="t" style="left:1016.50px;top:566.63px;font-size:12.6px;color:#888;font-weight:400;letter-spacing:-0.55px">Jul 28, 2021</div>
<svg class="abs" style="left:1127px;top:563.3px" width="22" height="22" viewBox="0 0 22 22" ><rect x="0" y="0" width="22" height="22" rx="5" fill="#fff"/><path d="M16 3.8 H6.3 A3.2 3.2 0 0 0 6.3 10.2 H15.7 A3.25 3.25 0 0 1 15.7 16.7 H6" fill="none" stroke="#4cb0e4" stroke-width="4.3"/><path d="M15 0.6 L21.2 3.8 L15 7 Z" fill="#4cb0e4"/><path d="M7 13.5 L0.8 16.7 L7 19.9 Z" fill="#4cb0e4"/></svg>
<div class="t" style="left:1153.50px;top:566.63px;font-size:12.6px;color:#888;font-weight:400;letter-spacing:-0.55px">Jul 28, 2021</div>
<svg class="abs" style="left:1533.5px;top:569.5px" width="13" height="13" viewBox="0 0 13 13" ><path d="M0.5 1.8 Q0.5 0.5 1.8 0.5 H5.6 Q6.2 0.5 6.7 1 L12.2 6.5 Q12.7 7 12.2 7.5 L7.5 12.2 Q7 12.7 6.5 12.2 L1 6.7 Q0.5 6.2 0.5 5.6 Z" fill="#777"/><circle cx="3.2" cy="3.2" r="1.1" fill="#fff"/></svg>
<div class="abs" style="left:296px;top:607px;width:39px;height:28px;background:#fdfdfd;border:1px solid #cdcdcd;border-radius:2px;box-shadow:0 1px 2px rgba(0,0,0,.25)"></div>
<svg class="abs" style="left:309.5px;top:612.6px" width="12" height="16" viewBox="0 0 12 16" ><path d="M6 0.3 A5.8 5.8 0 0 1 11.8 6.1 C11.8 8.4 10.4 9.6 9.3 10.9 C8.8 11.5 8.6 12 8.6 12.6 H3.4 C3.4 12 3.2 11.5 2.7 10.9 C1.6 9.6 0.2 8.4 0.2 6.1 A5.8 5.8 0 0 1 6 0.3 Z" fill="#f1c40f"/><path d="M3.5 13.6 H8.5 V14.6 Q8.5 16 7 16 H5 Q3.5 16 3.5 14.6 Z" fill="#f1c40f"/><path d="M3 5.6 A3 3 0 0 1 5.6 3" fill="none" stroke="#fff" stroke-width="0.8" opacity="0.8"/></svg>
<div class="t" style="left:345.50px;top:609.82px;font-size:12.5px;color:#3479bc;font-weight:400;">Anhyd %w/w</div>
<div class="t" style="left:345.50px;top:628.57px;font-size:10.2px;color:#777;font-weight:400;letter-spacing:0.2px">Term Id: 60</div>
<div class="abs" style="left:882px;top:607px;width:39px;height:28px;background:#fdfdfd;border:1px solid #cdcdcd;border-radius:2px;box-shadow:0 1px 2px rgba(0,0,0,.25)"></div>
<svg class="abs" style="left:893.5px;top:612.5px" width="17" height="17" viewBox="0 0 17 17" ><circle cx="6.8" cy="6.8" r="5.3" fill="none" stroke="#333" stroke-width="2.4"/><path d="M10.6 10.6 L15.5 15.5" stroke="#333" stroke-width="2.8" stroke-linecap="butt"/></svg>
<svg class="abs" style="left:992px;top:607.3px" width="22" height="22" viewBox="0 0 22 22" ><circle cx="11" cy="11" r="10.9" fill="#f5ebe1"/><path d="M6.5 7.5 Q6.5 3 11 3 Q15.5 3 15.5 7.5 Q15.5 12 13.5 15 V16.4 L19.2 18.5 Q16 21.9 11 21.9 Q6 21.9 2.8 18.5 L8.5 16.4 V15 Q6.5 12 6.5 7.5 Z" fill="#efcb9d"/><path d="M2.8 18.5 L8.5 16.2 Q11 17.8 13.5 16.2 L19.2 18.5 Q16 21.9 11 21.9 Q6 21.9 2.8 18.5 Z" fill="#e7c195"/></svg>
<div class="t" style="left:1016.50px;top:610.63px;font-size:12.6px;color:#888;font-weight:400;letter-spacing:-0.55px">Jul 28, 2021</div>
<svg class="abs" style="left:1127px;top:607.3px" width="22" height="22" viewBox="0 0 22 22" ><rect x="0" y="0" width="22" height="22" rx="5" fill="#fff"/><path d="M16 3.8 H6.3 A3.2 3.2 0 0 0 6.3 10.2 H15.7 A3.25 3.25 0 0 1 15.7 16.7 H6" fill="none" stroke="#4cb0e4" stroke-width="4.3"/><path d="M15 0.6 L21.2 3.8 L15 7 Z" fill="#4cb0e4"/><path d="M7 13.5 L0.8 16.7 L7 19.9 Z" fill="#4cb0e4"/></svg>
<div class="t" style="left:1153.50px;top:610.63px;font-size:12.6px;color:#888;font-weight:400;letter-spacing:-0.55px">Jul 28, 2021</div>
<svg class="abs" style="left:1533.5px;top:613.5px" width="13" height="13" viewBox="0 0 13 13" ><path d="M0.5 1.8 Q0.5 0.5 1.8 0.5 H5.6 Q6.2 0.5 6.7 1 L12.2 6.5 Q12.7 7 12.2 7.5 L7.5 12.2 Q7 12.7 6.5 12.2 L1 6.7 Q0.5 6.2 0.5 5.6 Z" fill="#777"/><circle cx="3.2" cy="3.2" r="1.1" fill="#fff"/></svg>
<div class="abs" style="left:296px;top:651px;width:39px;height:28px;background:#f3f3f3;border:1px solid #cdcdcd;border-radius:2px;box-shadow:0 1px 2px rgba(0,0,0,.25)"></div>
<svg class="abs" style="left:309.5px;top:656.6px" width="12" height="16" viewBox="0 0 12 16" ><path d="M6 0.3 A5.8 5.8 0 0 1 11.8 6.1 C11.8 8.4 10.4 9.6 9.3 10.9 C8.8 11.5 8.6 12 8.6 12.6 H3.4 C3.4 12 3.2 11.5 2.7 10.9 C1.6 9.6 0.2 8.4 0.2 6.1 A5.8 5.8 0 0 1 6 0.3 Z" fill="#f1c40f"/><path d="M3.5 13.6 H8.5 V14.6 Q8.5 16 7 16 H5 Q3.5 16 3.5 14.6 Z" fill="#f1c40f"/><path d="M3 5.6 A3 3 0 0 1 5.6 3" fill="none" stroke="#fff" stroke-width="0.8" opacity="0.8"/></svg>
<div class="t" style="left:345.50px;top:653.82px;font-size:12.5px;color:#3479bc;font-weight:400;">Anhyd Grams</div>
<div class="t" style="left:345.50px;top:672.57px;font-size:10.2px;color:#777;font-weight:400;letter-spacing:0.2px">Term Id: 36</div>
<div class="abs" style="left:882px;top:651px;width:39px;height:28px;background:#f3f3f3;border:1px solid #cdcdcd;border-radius:2px;box-shadow:0 1px 2px rgba(0,0,0,.25)"></div>
<svg class="abs" style="left:893.5px;top:656.5px" width="17" height="17" viewBox="0 0 17 17" ><circle cx="6.8" cy="6.8" r="5.3" fill="none" stroke="#333" stroke-width="2.4"/><path d="M10.6 10.6 L15.5 15.5" stroke="#333" stroke-width="2.8" stroke-linecap="butt"/></svg>
<svg class="abs" style="left:992px;top:651.3px" width="22" height="22" viewBox="0 0 22 22" ><circle cx="11" cy="11" r="10.9" fill="#f5ebe1"/><path d="M6.5 7.5 Q6.5 3 11 3 Q15.5 3 15.5 7.5 Q15.5 12 13.5 15 V16.4 L19.2 18.5 Q16 21.9 11 21.9 Q6 21.9 2.8 18.5 L8.5 16.4 V15 Q6.5 12 6.5 7.5 Z" fill="#efcb9d"/><path d="M2.8 18.5 L8.5 16.2 Q11 17.8 13.5 16.2 L19.2 18.5 Q16 21.9 11 21.9 Q6 21.9 2.8 18.5 Z" fill="#e7c195"/></svg>
<div class="t" style="left:1016.50px;top:654.63px;font-size:12.6px;color:#888;font-weight:400;letter-spacing:-0.55px">Jul 28, 2021</div>
<svg class="abs" style="left:1127px;top:651.3px" width="22" height="22" viewBox="0 0 22 22" ><rect x="0" y="0" width="22" height="22" rx="5" fill="#fff"/><path d="M16 3.8 H6.3 A3.2 3.2 0 0 0 6.3 10.2 H15.7 A3.25 3.25 0 0 1 15.7 16.7 H6" fill="none" stroke="#4cb0e4" stroke-width="4.3"/><path d="M15 0.6 L21.2 3.8 L15 7 Z" fill="#4cb0e4"/><path d="M7 13.5 L0.8 16.7 L7 19.9 Z" fill="#4cb0e4"/></svg>
<div class="t" style="left:1153.50px;top:654.63px;font-size:12.6px;color:#888;font-weight:400;letter-spacing:-0.55px">Jul 28, 2021</div>
<svg class="abs" style="left:1533.5px;top:657.5px" width="13" height="13" viewBox="0 0 13 13" ><path d="M0.5 1.8 Q0.5 0.5 1.8 0.5 H5.6 Q6.2 0.5 6.7 1 L12.2 6.5 Q12.7 7 12.2 7.5 L7.5 12.2 Q7 12.7 6.5 12.2 L1 6.7 Q0.5 6.2 0.5 5.6 Z" fill="#777"/><circle cx="3.2" cy="3.2" r="1.1" fill="#fff"/></svg>
<div class="abs" style="left:301px;top:700px;width:36px;height:25px;background:#f4f4f4;border:1px solid #d2d2d2;border-radius:4px"></div><svg class="abs" style="left:312.5px;top:705.8px" width="13" height="12" viewBox="0 0 13 12" ><rect x="0" y="0" width="1.8" height="12" fill="#888"/><path d="M3 6 L12.5 0.5 V11.5 Z" fill="#888"/></svg>
<div class="abs" style="left:342px;top:700px;width:33px;height:25px;background:#f4f4f4;border:1px solid #d2d2d2;border-radius:4px"></div><svg class="abs" style="left:355px;top:707px" width="8" height="10" viewBox="0 0 8 10" ><path d="M0 5 L8 0 V10 Z" fill="#888"/></svg>
<div class="abs" style="left:380px;top:699px;width:50px;height:26px;background:#fff;border:1px solid #cfcfcf;border-radius:3px"></div>
<div class="t" style="left:391.50px;top:706.72px;font-size:12.5px;color:#666;font-weight:400;">1</div>
<div class="t" style="left:434.50px;top:705.45px;font-size:14px;color:#555;font-weight:400;">/ 11</div>
<div class="abs" style="left:463px;top:700px;width:34px;height:25px;background:#f4f4f4;border:1px solid #d2d2d2;border-radius:4px"></div><svg class="abs" style="left:474.5px;top:707px" width="8" height="10" viewBox="0 0 8 10" ><path d="M8 5 L0 0 V10 Z" fill="#444"/></svg>
<div class="abs" style="left:501px;top:700px;width:34px;height:25px;background:#f4f4f4;border:1px solid #d2d2d2;border-radius:4px"></div><svg class="abs" style="left:512.5px;top:705.8px" width="13" height="12" viewBox="0 0 13 12" ><path d="M0 0.8 L7.6 6 L0 11.2 Z" fill="#444"/><rect x="10.2" y="0" width="2" height="12" fill="#444"/></svg>
<div class="abs" style="left:559px;top:699px;width:67px;height:25px;background:#fff;border:1px solid #cfcfcf;border-radius:3px"></div>
<div class="abs" style="left:560px;top:700px;width:65px;height:18px;overflow:hidden"><div class="t" style="left:14.00px;top:9.42px;font-size:12.5px;color:#555;font-weight:400;">50</div></div>
<svg class="abs" style="left:611.5px;top:708px" width="10" height="7" viewBox="0 0 10 7" ><path d="M1 1 L5 5 L9 1" fill="none" stroke="#444" stroke-width="2"/></svg>
<div class="t" style="left:629.00px;top:702.73px;font-size:14.5px;color:#444;font-weight:400;">items per page</div>
<div class="t" style="left:1743.50px;top:706.73px;font-size:14.5px;color:#444;font-weight:400;">1 - 50 of 518 items</div>
<div class="t" style="left:284.50px;top:813.86px;font-size:10.8px;color:#666;font-weight:400;">SPORIFY 21.3 Enterprise</div>
<svg class="abs" style="left:1520px;top:808px" width="16" height="16" viewBox="0 0 16 16" ><circle cx="8.0" cy="8.0" r="8.0" fill="#4a87c0"/><circle cx="8.0" cy="4.4" r="1.3" fill="#fff"/><path d="M5.7 6.8 H9.1 V11.6 H10.2 V13.2 H5.4 V11.6 H6.7 V8.4 H5.7 Z" fill="#fff"/></svg>
<div class="t" style="left:1538.80px;top:812.35px;font-size:11.4px;color:#666;font-weight:400;">Current Timezone: (UTC+00:00) Dublin, Edinburgh, Lisbon, London</div>
</body></html>
